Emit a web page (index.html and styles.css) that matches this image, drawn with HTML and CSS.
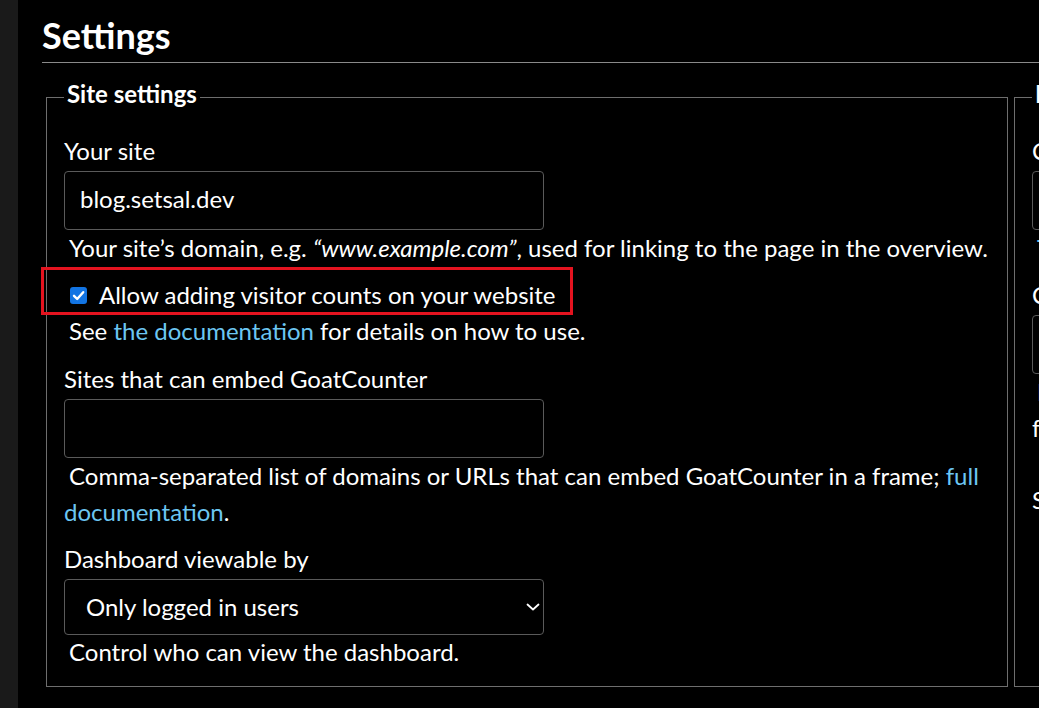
FILE: index.html
```html
<!DOCTYPE html>
<html lang="en">
<head>
<meta charset="utf-8">
<title>Settings</title>
<link rel="stylesheet" href="styles.css">
</head>
<body>
<div class="page">
  <aside class="strip"></aside>
  <main class="main">
    <h1 class="title">Settings</h1>
    <div class="rule"></div>
    <div class="forms">
      <fieldset class="box">
        <legend class="legend">Site settings</legend>
        <label class="label" for="cname">Your site</label>
        <input class="field" id="cname" type="text" value="blog.setsal.dev">
        <div class="help">Your site’s domain, e.g. <em>“www.example.com”</em>, used for linking to the page in the overview.</div>
        <div class="highlight">
          <label class="check">
            <span class="tick"><svg viewBox="0 0 17 17" width="17" height="17"><path d="M4 8.8 L7.2 12 L13.2 5.2" fill="none" stroke="#fff" stroke-width="2.4" stroke-linecap="round" stroke-linejoin="round"/></svg></span>
            <span>Allow adding visitor counts on your website</span>
          </label>
        </div>
        <div class="help help-after">See <a class="link" href="#">the documentation</a> for details on how to use.</div>
        <label class="label label-gap" for="embed">Sites that can embed GoatCounter</label>
        <input class="field" id="embed" type="text" value="">
        <div class="help">Comma-separated list of domains or URLs that can embed GoatCounter in a frame; <a class="link" href="#">full documentation</a>.</div>
        <label class="label label-gap2" for="public">Dashboard viewable by</label>
        <div class="select-wrap">
          <select class="select" id="public">
            <option>Only logged in users</option>
            <option>Anyone with a secret token</option>
            <option>Anyone</option>
          </select>
          <svg class="chev" viewBox="0 0 14 8" width="14" height="8"><path d="M1.5 1.5 L7 6.5 L12.5 1.5" fill="none" stroke="#fff" stroke-width="1.8" stroke-linecap="round" stroke-linejoin="round"/></svg>
        </div>
        <div class="help help-last">Control who can view the dashboard.</div>
      </fieldset>
      <fieldset class="box">
        <legend class="legend">Integrations</legend>
        <label class="label" for="c1">Collect</label>
        <input class="field" id="c1" type="text" value="">
        <div class="help"><a class="link" href="#">Tracking</a> options for pageviews.</div>
        <label class="label label-gap3" for="c2">Custom domain</label>
        <input class="field" id="c2" type="text" value="">
        <div class="help"><a class="link" href="#">Read</a> the guide</div>
        <div class="help help-flat">for setting up a custom domain.</div>
        <label class="label label-gap4" for="c3">Site code</label>
      </fieldset>
    </div>
  </main>
</div>
</body>
</html>
```
FILE: styles.css
```css
html, body {
  margin: 0;
  padding: 0;
  background: #000;
}
body {
  font-family: Lato, "Noto Sans", sans-serif;
  color: #fff;
  overflow: hidden;
}
.page {
  display: flex;
  height: 708px;
  overflow: hidden;
}
.strip {
  flex: 0 0 18px;
  background: #1a1a1a;
}
.main {
  flex: 1;
  min-width: 0;
  padding-left: 24px;
  overflow: hidden;
}
.title {
  margin: 0;
  padding-top: 15px;
  font-size: 36px;
  line-height: 40px;
  font-weight: 700;
}
.rule {
  height: 1px;
  background: #8a8a8a;
  margin-top: 7px;
}
.forms {
  display: flex;
  gap: 6px;
  padding-left: 4px;
  margin-top: 15px;
}
.box {
  flex: 0 0 962px;
  box-sizing: border-box;
  width: 962px;
  margin: 0;
  padding: 18px 17px 16px 17px;
  border: 1px solid #6e6e6e;
  min-width: 0;
}
.legend {
  padding: 0 3px 6px 3px;
  font-size: 24px;
  line-height: 32px;
  font-weight: 700;
}
.label {
  display: block;
  font-size: 24px;
  line-height: 36px;
  margin-top: -1px;
}
.label-gap { margin-top: 12px; }
.label-gap2 { margin-top: 11px; }
.label-gap3 { margin-top: 11px; }
.label-gap4 { margin-top: 36px; }
.field {
  display: block;
  box-sizing: border-box;
  width: 480px;
  height: 59px;
  margin-top: 2px;
  padding: 0 15px 5px 15px;
  background: #000;
  color: #fff;
  border: 1px solid #5a5a5a;
  border-radius: 4px;
  font-family: inherit;
  font-size: 24px;
  outline: none;
}
.help {
  font-size: 24px;
  line-height: 36px;
  text-indent: 5px;
}
.help-flat { text-indent: 0; }
.help-after { margin-top: -2px; }
.help-last { margin-top: -1px; }
.help em { font-style: italic; }
.link {
  color: #6cc6f2;
  text-decoration: none;
}
.highlight {
  box-sizing: border-box;
  width: 532px;
  margin: 1px 0 0 -23px;
  padding: 10px 0 2px 26px;
  border: 3px solid #e4131f;
}
.check {
  display: flex;
  align-items: center;
  gap: 12px;
  font-size: 24px;
  line-height: 30px;
}
.tick {
  display: flex;
  width: 17px;
  height: 17px;
  border-radius: 3px;
  background: #1274e3;
}
.select-wrap {
  position: relative;
  width: 480px;
  height: 56px;
  margin-top: 2px;
}
.select {
  appearance: none;
  -webkit-appearance: none;
  box-sizing: border-box;
  width: 100%;
  height: 100%;
  padding: 0 40px 2px 21px;
  background: #000;
  color: #fff;
  border: 1px solid #5a5a5a;
  border-radius: 4px;
  font-family: inherit;
  font-size: 24px;
  outline: none;
}
.chev {
  position: absolute;
  right: 4px;
  top: 24px;
}
```
